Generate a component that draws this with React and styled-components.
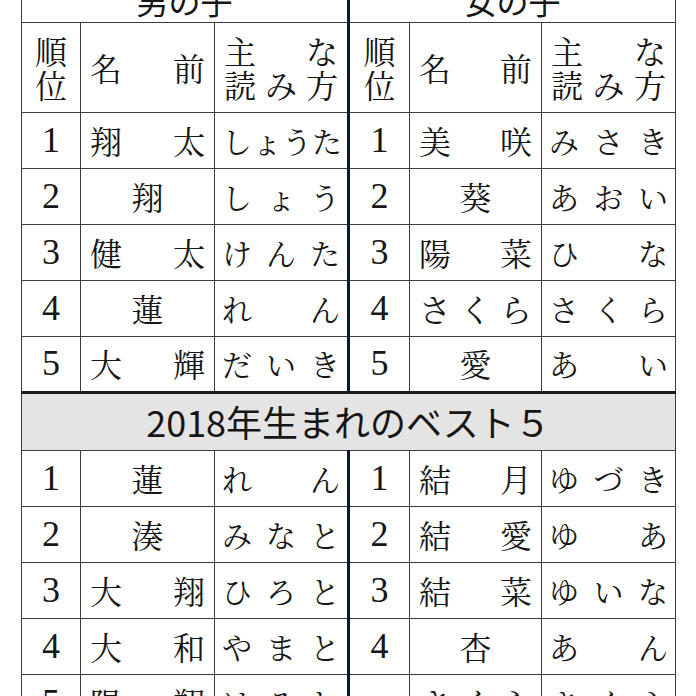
import React from "react";
import styled, { createGlobalStyle } from "styled-components";

const Global = createGlobalStyle`
  html, body { margin: 0; padding: 0; background: #fff; }
  body { font-family: "Noto Serif CJK JP", "Noto Sans CJK JP", serif; color: #161616; }
`;

const Page = styled.div`
  height: 696px;
  overflow: hidden;
  padding-left: 21px;
`;

const Sheet = styled.table`
  width: 654px;
  margin-top: -34px;
  border-collapse: collapse;
  table-layout: fixed;
`;

const Line = "1px solid #3c3c3c";

const Cell = styled.td`
  border: ${Line};
  height: ${(p) => p.$h || 56}px;
  padding: 0 ${(p) => (p.$reading ? 7 : 9)}px;
  vertical-align: middle;
  box-sizing: border-box;
  font-size: ${(p) => (p.$reading ? 30 : 32)}px;
  line-height: 1.05;
  font-weight: 400;
  ${(p) => (p.$split ? "border-right: 3px solid #0c1733;" : "")}
`;

const TitleCell = styled(Cell)`
  font-family: "Noto Sans CJK JP", sans-serif;
  font-size: 32px;
  text-align: center;
  padding-top: 12px;
`;

const RankCell = styled(Cell)`
  font-family: "Liberation Serif", "Noto Serif CJK JP", serif;
  font-size: 36px;
  text-align: center;
  padding: 0;
`;

const StackCell = styled(Cell)`
  text-align: center;
  padding: 0;
`;

const BandCell = styled.td`
  height: 56px;
  padding: 0;
  border: ${Line};
  border-top: 3px solid #1b1b1b;
  background: #e4e4e4;
  text-align: center;
  vertical-align: middle;
  font-family: "Noto Sans CJK JP", sans-serif;
  font-size: 36px;
  line-height: 1.1;
`;

const Spread = styled.div`
  display: flex;
  justify-content: ${(p) => (p.$one ? "center" : "space-between")};
  white-space: nowrap;
`;

const Lines = styled.div`
  display: flex;
  flex-direction: column;
`;

const Text = ({ s }) => {
  const chars = Array.from(s);
  return (
    <Spread $one={chars.length === 1}>
      {chars.map((c, i) => (
        <span key={i}>{c}</span>
      ))}
    </Spread>
  );
};

const top = [
  ["1", "翔太", "しょうた", "1", "美咲", "みさき"],
  ["2", "翔", "しょう", "2", "葵", "あおい"],
  ["3", "健太", "けんた", "3", "陽菜", "ひな"],
  ["4", "蓮", "れん", "4", "さくら", "さくら"],
  ["5", "大輝", "だいき", "5", "愛", "あい"],
];

const bottom = [
  ["1", "蓮", "れん", "1", "結月", "ゆづき"],
  ["2", "湊", "みなと", "2", "結愛", "ゆあ"],
  ["3", "大翔", "ひろと", "3", "結菜", "ゆいな"],
  ["4", "大和", "やまと", "4", "杏", "あん"],
  ["5", "陽翔", "はると", "", "さくら", "さくら"],
];

const Row = ({ r }) => (
  <tr>
    <RankCell>{r[0]}</RankCell>
    <Cell><Text s={r[1]} /></Cell>
    <Cell $split $reading><Text s={r[2]} /></Cell>
    <RankCell>{r[3]}</RankCell>
    <Cell><Text s={r[4]} /></Cell>
    <Cell $reading><Text s={r[5]} /></Cell>
  </tr>
);

const Header = ({ split }) => (
  <>
    <StackCell $h={90}>
      <Lines>
        <span>順</span>
        <span>位</span>
      </Lines>
    </StackCell>
    <Cell $h={90}><Text s="名前" /></Cell>
    <Cell $h={90} $split={split}>
      <Lines>
        <Text s="主な" />
        <Text s="読み方" />
      </Lines>
    </Cell>
  </>
);

export default function App() {
  return (
    <Page>
      <Global />
      <Sheet>
        <colgroup>
          <col style={{ width: 59 }} />
          <col style={{ width: 134 }} />
          <col style={{ width: 134 }} />
          <col style={{ width: 61 }} />
          <col style={{ width: 132 }} />
          <col style={{ width: 134 }} />
        </colgroup>
        <tbody>
          <tr>
            <TitleCell colSpan={3} $split>男の子</TitleCell>
            <TitleCell colSpan={3}>女の子</TitleCell>
          </tr>
          <tr>
            <Header split />
            <Header />
          </tr>
          {top.map((r, i) => (
            <Row key={"t" + i} r={r} />
          ))}
          <tr>
            <BandCell colSpan={6}>2018年生まれのベスト５</BandCell>
          </tr>
          {bottom.map((r, i) => (
            <Row key={"b" + i} r={r} />
          ))}
        </tbody>
      </Sheet>
    </Page>
  );
}
